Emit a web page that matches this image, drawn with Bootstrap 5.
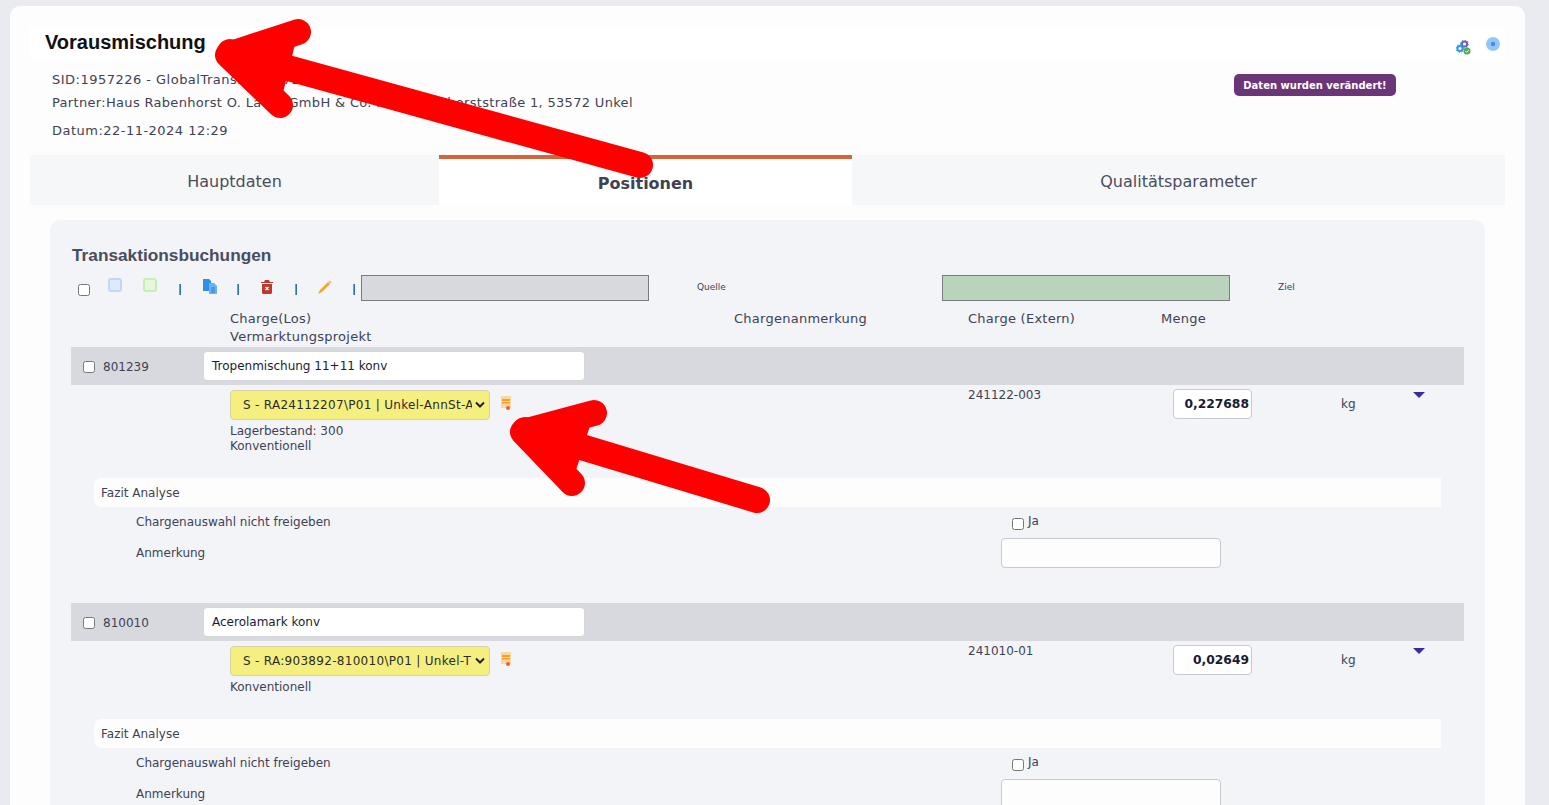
<!DOCTYPE html>
<html lang="de">
<head>
<meta charset="utf-8">
<title>Vorausmischung</title>
<link href="https://cdn.jsdelivr.net/npm/bootstrap@5.3.0/dist/css/bootstrap.min.css" rel="stylesheet">
<style>
html,body{height:100%;overflow:hidden}
body{background:#e9ebf0;font-family:"DejaVu Sans",sans-serif;font-size:12px;color:#3f4254}
.sheet{position:relative;margin:6px 24px 0 10px;background:#fdfdfd;border-radius:10px 10px 0 0;padding:21px 20px 0;height:900px}
.headband{height:33px;background:#fff;padding-left:15px;align-items:center}
.headband h1{font:700 20px/33px "Liberation Sans",sans-serif;color:#111;margin:-3px 0 0;flex:1}
.headicons{margin-right:5px}
.gear{margin-top:7px}
.disc{margin:1px 0 0 14px}
.metablock{height:95px;font-size:13px;letter-spacing:.32px;position:relative;color:#3f4254}
.metaline{position:absolute;left:22px;white-space:nowrap;line-height:16px}
.m1{top:12px;letter-spacing:.48px}.m2{top:35px}.m3{top:63px;letter-spacing:.48px}
.changed{position:absolute;left:1204px;top:14px;width:162px;height:22px;padding-top:1px;background:#6b3578;color:#fff;border-radius:5px;font-size:10px;letter-spacing:0;font-weight:700;display:flex;align-items:center;justify-content:center}
.tabrow{display:grid;grid-template-columns:409px 413px 653px;height:50px;background:#f6f7f9}
.tabcell{display:flex;align-items:center;justify-content:center;font-size:16px;color:#4a4d5c;padding-top:3px}
.tabcell.on{background:#fff;border-top:4px solid #d2633a;font-weight:700;color:#3f4254;font-size:16px;padding:3px 0 0}
.panel{margin:15px 20px 0;background:#f2f4f8;border-radius:10px;padding:27px 21px 0;height:700px}
.panel h2{font:700 17.25px/16px "Liberation Sans",sans-serif;color:#4a4d5c;margin:0 0 11px 1px;height:16px}
.bar{display:flex;align-items:center;height:28px;position:relative}
.cb{appearance:none;width:12px;height:12px;border:1px solid #767676;border-radius:2.5px;background:#fff;margin:0;display:block;flex:none}
.bar>.cb{margin-left:7px;margin-top:3px}
.tick{width:2px;height:11px;background:linear-gradient(90deg,#b88f52 35%,#2f6fb5 35%);margin-top:2px}
.sw1{margin:-6px 0 0 18px}
.sw2{margin:-6px 0 0 21px}
.t1{margin-left:22px}
.copy{margin:-4px 0 0 22px}
.t2{margin-left:20px}
.trash{margin:-2px 0 0 22px}
.t3{margin-left:22px}
.pen{margin:-2px 0 0 21px}
.t4{margin-left:21px}
.swatch{width:288px;height:26px;border:1px solid #7a7c80}
.swatch.src{background:#d8d9df;margin-left:6px}
.swatch.dst{background:#bad4bb}
.tiny{font-size:9px;color:#3f4254;margin-left:48px}
.tiny.q{width:245px}
.colheads{display:grid;grid-template-columns:159px 504px 234px 193px 1fr;height:37px;margin-top:8px;font-size:13px;letter-spacing:.26px;line-height:18px}
.colheads>div:first-child{grid-column:2}
.greyband{background:#d8d9df;height:38px;display:flex;align-items:center;padding:2px 0 0 12px}
.greyband span{margin-left:8px;width:100px;font-size:12px;flex:none}
.nameinput{width:382px;height:30px;margin-top:-3px;flex:none;background:#fff;border:1px solid #d4d5da;border-radius:4px;display:flex;align-items:center;padding-left:8px;color:#181c32;font-size:12px}
.detail{display:grid;grid-template-columns:159px 738px 205px 168px 72px 1fr;position:relative}
.lotbox{padding-top:5px}
.lotsel{width:260px;height:30px;background:#f5ef80;border:1px solid #d6d3a0;border-radius:4px;display:flex;align-items:center;padding:0 2px 0 12px;font-size:12px;letter-spacing:.3px;color:#2b2b2b;overflow:hidden;white-space:nowrap}
.lotsel span{flex:1;overflow:hidden}
.lotsel svg{margin:0 2px 0 3px}
.lotrow{display:flex;gap:10px}
.memo{margin-top:6px}
.lotnote{margin-top:4px;line-height:15px}
.ext{padding-top:4px;line-height:13px}
.qty{width:79px;height:30px;margin-top:4px;background:#fff;border:1px solid #c9cacf;border-radius:4px;font-weight:700;font-size:12.3px;color:#181c32;display:flex;align-items:center;justify-content:flex-end;padding-right:2px}
.unit{padding-top:10px}
.tri{width:0;height:0;border-left:6px solid transparent;border-right:6px solid transparent;border-top:6px solid #3a2aa8;margin-top:7px}
.fazit{margin:0 23px;height:29px;background:#fdfdfd;border-radius:8px 0 0 8px;display:flex;align-items:center;padding-left:7px}
.frow{display:grid;grid-template-columns:865px 1fr;padding-left:65px;align-items:center}
.frow1{height:29px}
.frow2{height:33px}
.ja{display:flex;gap:4px;padding-left:11px;align-items:flex-start}
.ja .cb{margin-top:4px}
.ja span{line-height:12px;margin-top:1px}
.blank{width:220px;height:30px;background:#fdfdfd;border:1px solid #c9cacf;border-radius:4px}
.item1 .lotblock{height:93px}
.item2 .lotblock{height:78px}
.spacer1{height:34px}
.overlay{position:absolute;left:0;top:0;pointer-events:none}
</style>
</head>
<body>
<div class="sheet">
  <div class="headband d-flex">
    <h1>Vorausmischung</h1>
    <div class="headicons d-flex align-items-center">
      <svg class="gear" width="16" height="15" viewBox="0 0 16 15"><circle cx="8.500" cy="4" r="2.600" fill="#fff" stroke="#6a62c0" stroke-width="2"/><circle cx="8.500" cy="4" r="3.900" fill="none" stroke="#6a62c0" stroke-width="1" stroke-dasharray="1.500 1.500"/><circle cx="4" cy="8.500" r="2.600" fill="#fff" stroke="#2f95e8" stroke-width="2"/><circle cx="4" cy="8.500" r="3.900" fill="none" stroke="#2f95e8" stroke-width="1" stroke-dasharray="1.500 1.500"/><circle cx="11" cy="11" r="3.500" fill="#4caf50"/><path d="M9.300 11l1.300 1.300 2.200-2.300" fill="none" stroke="#fff" stroke-width="1"/></svg>
      <svg class="disc" width="14" height="14" viewBox="0 0 14 14"><circle cx="7" cy="7" r="7" fill="#92c8f8"/><circle cx="7" cy="7" r="2.200" fill="#4b8be8"/></svg>
    </div>
  </div>
  <div class="metablock">
    <div class="metaline m1">SID:1957226 - GlobalTransID:1957226</div>
    <div class="metaline m2">Partner:Haus Rabenhorst O. Lauer GmbH &amp; Co. KG, Rabenhorststraße 1, 53572 Unkel</div>
    <div class="metaline m3">Datum:22-11-2024 12:29</div>
    <div class="changed">Daten wurden verändert!</div>
  </div>
  <div class="tabrow">
    <div class="tabcell">Hauptdaten</div>
    <div class="tabcell on">Positionen</div>
    <div class="tabcell">Qualitätsparameter</div>
  </div>
  <div class="panel">
    <h2>Transaktionsbuchungen</h2>
    <div class="bar">
      <input type="checkbox" class="cb">
      <svg class="sw1" width="14" height="14" viewBox="0 0 14 14"><rect x="1" y="1" width="12" height="12" rx="2" fill="#dcebfb" stroke="#c3d6f5" stroke-width="2"/></svg>
      <svg class="sw2" width="14" height="14" viewBox="0 0 14 14"><rect x="1" y="1" width="12" height="12" rx="2" fill="#e8f8e0" stroke="#c5efb5" stroke-width="2"/></svg>
      <i class="tick t1"></i>
      <svg class="copy" width="14" height="15" viewBox="0 0 14 15"><path d="M0 0h6l2 2v10H0z" fill="#2f8fe8"/><path d="M6 4h5l3 3v8H6z" fill="#6ab3f2"/><path d="M8 9h4M8 11h4M8 13h4" stroke="#2f7fd0"/></svg>
      <i class="tick t2"></i>
      <svg class="trash" width="12" height="14" viewBox="0 0 12 14"><path d="M4 0h4l1 2h3v1H0V2h3z" fill="#c0392f"/><path d="M1 4h10v9l-1 1H2l-1-1z" fill="#c0392f"/><path d="M4.500 7l3 3M7.500 7l-3 3" stroke="#fff" stroke-width="1.200"/></svg>
      <i class="tick t3"></i>
      <svg class="pen" width="14" height="14" viewBox="0 0 14 14"><path d="M0 14l2-4L10 2l2 2-8 8z" fill="#f5a623"/><path d="M11 1l2 2" stroke="#e8a0a0" stroke-width="1.500"/></svg>
      <i class="tick t4"></i>
      <div class="swatch src"></div>
      <div class="tiny q">Quelle</div>
      <div class="swatch dst"></div>
      <div class="tiny">Ziel</div>
    </div>
    <div class="colheads">
      <div>Charge(Los)<br>Vermarktungsprojekt</div>
      <div>Chargenanmerkung</div>
      <div>Charge (Extern)</div>
      <div>Menge</div>
    </div>

    <div class="item1">
      <div class="greyband"><input type="checkbox" class="cb"><span>801239</span><div class="nameinput">Tropenmischung 11+11 konv</div></div>
      <div class="detail lotblock">
        <div></div>
        <div class="lotbox">
          <div class="lotrow"><div class="lotsel"><span>S - RA24112207\P01 | Unkel-AnnSt-A</span><svg width="10" height="8" viewBox="0 0 10 8"><path d="M1 1.500l4 4 4-4" fill="none" stroke="#222" stroke-width="2"/></svg></div>
          <svg class="memo" width="12" height="15" viewBox="0 0 12 15"><path d="M1 0h10v12H1z" fill="#fdd6a0"/><path d="M2 3h8v2H2zM2 6h8v1.500H2z" fill="#f5a030"/><circle cx="8" cy="12" r="2" fill="#f06030"/></svg></div>
          <div class="lotnote">Lagerbestand: 300<br>Konventionell</div>
        </div>
        <div class="ext">241122-003</div>
        <div class="qty">0,227688</div>
        <div class="unit">kg</div>
        <div class="tri"></div>
      </div>
      <div class="fazit">Fazit Analyse</div>
      <div class="frow frow1"><div>Chargenauswahl nicht freigeben</div><div class="ja"><input type="checkbox" class="cb"><span>Ja</span></div></div>
      <div class="frow frow2"><div>Anmerkung</div><div><div class="blank"></div></div></div>
      <div class="spacer1"></div>
    </div>

    <div class="item2">
      <div class="greyband"><input type="checkbox" class="cb"><span>810010</span><div class="nameinput">Acerolamark konv</div></div>
      <div class="detail lotblock">
        <div></div>
        <div class="lotbox">
          <div class="lotrow"><div class="lotsel"><span>S - RA:903892-810010\P01 | Unkel-T</span><svg width="10" height="8" viewBox="0 0 10 8"><path d="M1 1.500l4 4 4-4" fill="none" stroke="#222" stroke-width="2"/></svg></div>
          <svg class="memo" width="12" height="15" viewBox="0 0 12 15"><path d="M1 0h10v12H1z" fill="#fdd6a0"/><path d="M2 3h8v2H2zM2 6h8v1.500H2z" fill="#f5a030"/><circle cx="8" cy="12" r="2" fill="#f06030"/></svg></div>
          <div class="lotnote">Konventionell</div>
        </div>
        <div class="ext">241010-01</div>
        <div class="qty">0,02649</div>
        <div class="unit">kg</div>
        <div class="tri"></div>
      </div>
      <div class="fazit">Fazit Analyse</div>
      <div class="frow frow1"><div>Chargenauswahl nicht freigeben</div><div class="ja"><input type="checkbox" class="cb"><span>Ja</span></div></div>
      <div class="frow frow2"><div>Anmerkung</div><div><div class="blank"></div></div></div>
    </div>
  </div>
</div>
<svg class="overlay" width="1549" height="805" viewBox="0 0 1549 805">
  <g fill="#ff0000" stroke="#ff0000" stroke-width="26" stroke-linecap="round" stroke-linejoin="round">
    <path d="M640 165L230 52" fill="none"/>
    <path d="M298 32L228 55L280 105"/>
    <path d="M757 500L525 430" fill="none"/>
    <path d="M594 413L523 432L572 483"/>
  </g>
</svg>
</body>
</html>
